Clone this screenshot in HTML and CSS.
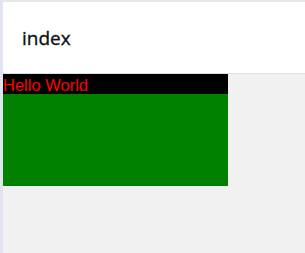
FILE: index.html
```html
<html lang="en">
<head>
    <meta charset="UTF-8">
    <title>index</title>
    <link rel="stylesheet" href="styles.css">
</head>
<body>
    <div class="app">
        <div class="header">
            <span class="title">index</span>
        </div>
        <div class="main">
            <div class="box">
                <div class="hello">Hello World</div>
                <div class="green"></div>
            </div>
        </div>
    </div>
</body>
</html>
```

FILE: styles.css
```css
html, body {
    margin: 0;
    padding: 0;
    height: 100%;
}
.app {
    height: 100%;
    box-sizing: border-box;
    border-top: 2px solid #e4e7ed;
    border-left: 3px solid #dfe4ee;
    background-color: #f1f1f1;
    display: flex;
    flex-direction: column;
}
.header {
    height: 71px;
    background: #fff;
    border-bottom: 1px solid #dcdfe6;
    display: flex;
    align-items: center;
    padding-left: 19px;
}
.title {
    font-family: "Open Sans", sans-serif;
    font-size: 19px;
    color: #111;
    -webkit-text-stroke: 0.35px #111;
    margin-top: 1px;
}
.box {
    width: 225px;
}
.hello {
    background: #000;
    color: #f00;
    font-family: "Liberation Sans", Arial, sans-serif;
    font-size: 16.5px;
    line-height: 20px;
    height: 20px;
    padding-top: 1px;
    box-sizing: border-box;
}
.green {
    background: #008000;
    height: 91.5px;
}
```
